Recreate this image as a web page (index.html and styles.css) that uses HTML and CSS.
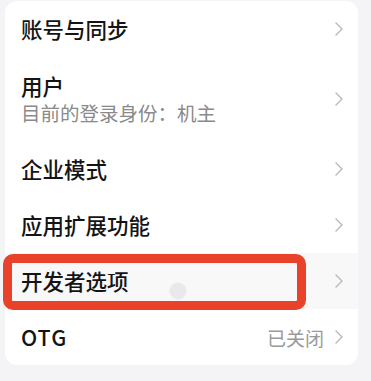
FILE: index.html
```html
<!DOCTYPE html>
<html lang="zh-CN">
<head>
<meta charset="utf-8">
<link rel="stylesheet" href="styles.css">
</head>
<body>
<div class="card">
  <div class="row">
    <div class="title">账号与同步</div>
    <svg class="chev" viewBox="0 0 8 14"><path d="M1 1l6 6-6 6"/></svg>
  </div>
  <div class="row row-tall">
    <div class="texts">
      <div class="title">用户</div>
      <div class="sub">目前的登录身份：机主</div>
    </div>
    <svg class="chev" viewBox="0 0 8 14"><path d="M1 1l6 6-6 6"/></svg>
  </div>
  <div class="row">
    <div class="title">企业模式</div>
    <svg class="chev" viewBox="0 0 8 14"><path d="M1 1l6 6-6 6"/></svg>
  </div>
  <div class="row">
    <div class="title">应用扩展功能</div>
    <svg class="chev" viewBox="0 0 8 14"><path d="M1 1l6 6-6 6"/></svg>
  </div>
  <div class="row row-pressed">
    <div class="title">开发者选项</div>
    <svg class="chev" viewBox="0 0 8 14"><path d="M1 1l6 6-6 6"/></svg>
    <div class="touch"></div>
    <div class="highlight"></div>
  </div>
  <div class="row">
    <div class="title latin">OTG</div>
    <div class="value">已关闭</div>
    <svg class="chev" viewBox="0 0 8 14"><path d="M1 1l6 6-6 6"/></svg>
  </div>
</div>
</body>
</html>
```
FILE: styles.css
```css
html, body {
  margin: 0;
  padding: 0;
  background: #f4f4f6;
}
body {
  width: 371px;
  height: 381px;
  overflow: hidden;
  font-family: "Noto Sans CJK SC", "Noto Sans", sans-serif;
}
.card {
  margin: 1px 13px 0 5px;
  background: #ffffff;
  border-radius: 12px;
}
.row {
  position: relative;
  height: 56px;
  display: flex;
  align-items: center;
  padding: 0 15px 0 16px;
}
.row-tall {
  height: 84px;
}
.row-pressed {
  background: #f8f8f9;
}
.texts {
  display: flex;
  flex-direction: column;
}
.title {
  flex: 1;
  font-size: 21.5px;
  line-height: 28px;
  font-weight: 500;
  color: #141414;
}
.latin {
  letter-spacing: 1px;
}
.sub {
  font-size: 19.5px;
  line-height: 26px;
  color: #8a8a8a;
}
.texts .title {
  flex: none;
}
.value {
  font-size: 19px;
  color: #9a9a9a;
  margin-right: 11px;
}
.chev {
  width: 8px;
  height: 14px;
  flex: none;
}
.chev path {
  fill: none;
  stroke: #b8b8b8;
  stroke-width: 1.4;
  stroke-linecap: round;
  stroke-linejoin: round;
}
.texts + .chev {
  margin-left: auto;
}
.touch {
  position: absolute;
  left: 165px;
  top: 30px;
  width: 16px;
  height: 16px;
  border-radius: 50%;
  background: #e9e9ed;
  box-shadow: 0 0 0 1px #f1f1f3;
}
.highlight {
  position: absolute;
  left: -2px;
  top: 1px;
  width: 303px;
  height: 56px;
  box-sizing: border-box;
  border: 9px solid #e9422b;
  border-radius: 10px;
}
```
